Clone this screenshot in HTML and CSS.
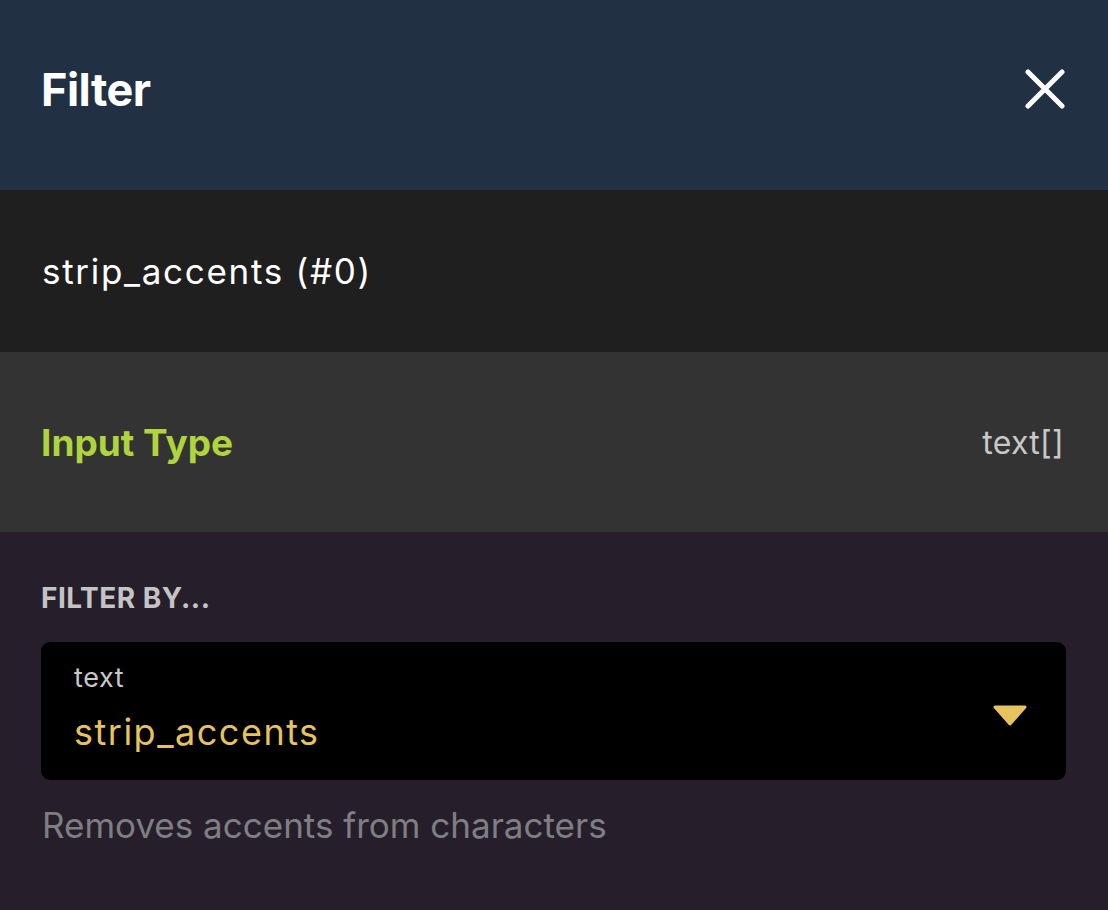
FILE: index.html
```html
<!DOCTYPE html>
<html lang="en">
<head>
<meta charset="utf-8">
<title>Filter</title>
<link rel="stylesheet" href="styles.css">
</head>
<body>
<div class="panel">
  <header class="header">
    <h1 class="title">Filter</h1>
    <button class="close" aria-label="Close">
      <svg width="40" height="40" viewBox="0 0 40 40"><path d="M3 3 L37 37 M37 3 L3 37" stroke="#fff" stroke-width="5" stroke-linecap="round" fill="none"/></svg>
    </button>
  </header>
  <section class="name-row">strip_accents (#0)</section>
  <section class="type-row">
    <span class="type-label">Input Type</span>
    <span class="type-value">text[]</span>
  </section>
  <section class="filter-body">
    <div class="section-label">FILTER BY...</div>
    <div class="select">
      <div class="select-text">
        <div class="select-group">text</div>
        <div class="select-value">strip_accents</div>
      </div>
      <svg class="caret" width="36" height="22" viewBox="0 0 36 22"><path d="M3 2 L33 2 L18 19 Z" fill="#e6c35c" stroke="#e6c35c" stroke-width="3" stroke-linejoin="round"/></svg>
    </div>
    <p class="description">Removes accents from characters</p>
  </section>
</div>
</body>
</html>
```

FILE: styles.css
```css
* { box-sizing: border-box; }
html, body {
  margin: 0;
  padding: 0;
  background: #261f2b;
  font-family: Inter, "Noto Sans", sans-serif;
}
.panel {
  width: 1108px;
  height: 910px;
  display: flex;
  flex-direction: column;
  background: #261f2b;
}
.header {
  height: 190px;
  background: #213043;
  display: flex;
  align-items: center;
  justify-content: space-between;
  padding: 0 43px 12px 41px;
}
.title {
  margin: 0;
  color: #fff;
  font-size: 45px;
  font-weight: 700;
  letter-spacing: -0.5px;
}
.close {
  background: none;
  border: none;
  padding: 0;
  width: 40px;
  height: 40px;
  display: flex;
}
.name-row {
  height: 162px;
  background: #1f1f1f;
  color: #fff;
  font-size: 35px;
  letter-spacing: 1.7px;
  display: flex;
  align-items: center;
  padding: 0 42px;
}
.type-row {
  height: 180px;
  background: #333333;
  display: flex;
  align-items: center;
  justify-content: space-between;
  padding: 0 44px 0 41px;
}
.type-label {
  color: #b0d43e;
  font-size: 37px;
  font-weight: 700;
}
.type-value {
  color: #c8c8c8;
  font-size: 32px;
  letter-spacing: 0.3px;
}
.filter-body {
  flex: 1;
  padding: 49px 42px 0 41px;
}
.section-label {
  color: #c4c4c4;
  font-size: 28px;
  font-weight: 700;
  line-height: 34px;
  letter-spacing: 0.5px;
}
.select {
  margin-top: 27px;
  height: 138px;
  background: #000;
  border-radius: 9px;
  display: flex;
  align-items: center;
  justify-content: space-between;
  padding: 0 38px 4px 33px;
}
.select-group {
  color: #c8c8c8;
  font-size: 27px;
  line-height: 36px;
  letter-spacing: 0.6px;
}
.select-value {
  color: #e6c35c;
  font-size: 36px;
  line-height: 52px;
  letter-spacing: 1.5px;
  margin-top: 10px;
}
.caret { display: block; margin-top: 14px; }
.description {
  margin: 25px 0 0 1px;
  color: #7f7e82;
  font-size: 35px;
  line-height: 40px;
}
```
